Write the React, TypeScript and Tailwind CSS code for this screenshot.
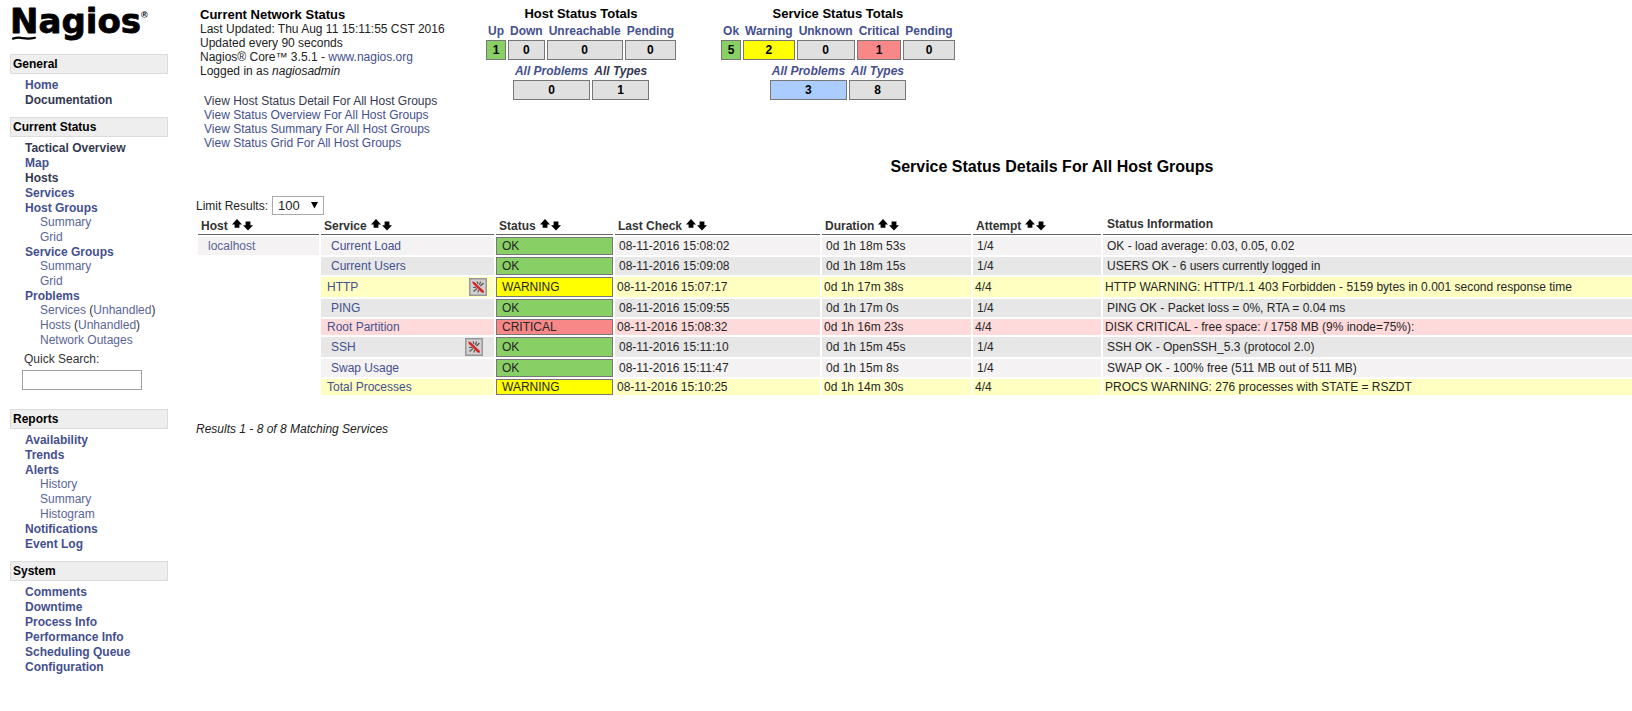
import React from "react";

type Item = { label: string; sub?: string[]; visited?: boolean };

const link = "text-[#44508f] hover:underline";
const visitedLink = "text-[#35384f] hover:underline";

const general: Item[] = [{ label: "Home" }, { label: "Documentation", visited: true }];

const currentStatus: Item[] = [
  { label: "Tactical Overview", visited: true },
  { label: "Map" },
  { label: "Hosts", visited: true },
  { label: "Services" },
  { label: "Host Groups", sub: ["Summary", "Grid"] },
  { label: "Service Groups", sub: ["Summary", "Grid"] },
  { label: "Problems", sub: ["Services (Unhandled)", "Hosts (Unhandled)", "Network Outages"] },
];

const reports: Item[] = [
  { label: "Availability" },
  { label: "Trends" },
  { label: "Alerts", sub: ["History", "Summary", "Histogram"] },
  { label: "Notifications" },
  { label: "Event Log" },
];

const system: Item[] = [
  { label: "Comments" },
  { label: "Downtime" },
  { label: "Process Info" },
  { label: "Performance Info" },
  { label: "Scheduling Queue" },
  { label: "Configuration" },
];

function SubLink({ text }: { text: string }) {
  const m = text.match(/^(\w+) \((\w+)\)$/);
  if (!m) return <a href="#" className="text-[#5a6598] hover:underline">{text}</a>;
  return (
    <>
      <a href="#" className="text-[#5a6598] hover:underline">{m[1]}</a> (
      <a href="#" className="text-[#5a6598] hover:underline">{m[2]}</a>)
    </>
  );
}

function NavSection({ title, items, children }: { title: string; items: Item[]; children?: React.ReactNode }) {
  return (
    <section>
      <h2 className="h-5 border border-[#dcdcdc] bg-[#eeeeee] pl-[2px] text-xs leading-[18px] font-bold">{title}</h2>
      <ul className="pt-1 pl-[15px] text-[#333]">
        {items.map((it) => (
          <li key={it.label}>
            <div className={it.sub ? "leading-[14px]" : "leading-[15px]"}>
              <a href="#" className={`font-bold ${it.visited ? visitedLink : link}`}>{it.label}</a>
            </div>
            {it.sub && (
              <ul className="pl-[15px] leading-[15px]">
                {it.sub.map((s) => (
                  <li key={s} className="whitespace-nowrap"><SubLink text={s} /></li>
                ))}
              </ul>
            )}
          </li>
        ))}
      </ul>
      {children}
    </section>
  );
}

function Logo() {
  return (
    <svg width="144" height="46" viewBox="0 0 144 46" role="img" aria-label="Nagios" className="block">
      <text x="0" y="33" fontFamily="DejaVu Sans" fontWeight="700" fontSize="34" stroke="#000" strokeWidth="0.8" strokeLinejoin="round">
        Nagios
      </text>
      <text x="131" y="18" fontFamily="Liberation Sans" fontWeight="700" fontSize="9">®</text>
      <path d="M3 38.6 Q8 37 13 38.2 Q19 39.2 25 37.8" fill="none" stroke="#000" strokeWidth="2.2" strokeLinecap="round" />
    </svg>
  );
}

type Total = { label: string; value: number; tone: string; visited?: boolean };
const gray = "bg-[#e0e0e0]";

function TotalsRow({ totals, italic }: { totals: Total[]; italic?: boolean }) {
  return (
    <table className="mx-auto border-separate border-spacing-x-[2px] border-spacing-y-0">
      <thead>
        <tr>
          {totals.map((t) => (
            <th key={t.label} className={`h-[18px] px-[2px] font-bold whitespace-nowrap ${italic ? "italic" : ""}`}>
              <a href="#" className={t.visited ? visitedLink : link}>{t.label}</a>
            </th>
          ))}
        </tr>
      </thead>
      <tbody>
        <tr>
          {totals.map((t) => (
            <td key={t.label} className={`h-5 border border-[#777777] p-0 text-center font-bold ${t.tone}`}>{t.value}</td>
          ))}
        </tr>
      </tbody>
    </table>
  );
}

function Totals({ title, rows }: { title: string; rows: Total[][] }) {
  return (
    <section>
      <h2 className="mb-px h-[14px] text-center text-[13px] leading-[14px] font-bold">{title}</h2>
      <TotalsRow totals={rows[0]} />
      <div className="pt-[2px]"><TotalsRow totals={rows[1]} italic /></div>
    </section>
  );
}

const hostTotals: Total[][] = [
  [
    { label: "Up", value: 1, tone: "bg-[#88d066]" },
    { label: "Down", value: 0, tone: gray },
    { label: "Unreachable", value: 0, tone: gray },
    { label: "Pending", value: 0, tone: gray },
  ],
  [
    { label: "All Problems", value: 0, tone: gray },
    { label: "All Types", value: 1, tone: gray, visited: true },
  ],
];

const serviceTotals: Total[][] = [
  [
    { label: "Ok", value: 5, tone: "bg-[#88d066]" },
    { label: "Warning", value: 2, tone: "bg-[#ffff00]" },
    { label: "Unknown", value: 0, tone: gray },
    { label: "Critical", value: 1, tone: "bg-[#f88888]" },
    { label: "Pending", value: 0, tone: gray },
  ],
  [
    { label: "All Problems", value: 3, tone: "bg-[#aaccff]" },
    { label: "All Types", value: 8, tone: gray },
  ],
];

function SortArrows({ column }: { column: string }) {
  return (
    <span className="ml-1 inline-flex gap-[1px] align-top">
      <a href="#" aria-label={`Sort by ${column} ascending`}>
        <svg width="10" height="12" viewBox="0 0 10 12"><path d="M5 0 L10 5.4 H7.4 V8.8 H2.6 V5.4 H0 Z" /></svg>
      </a>
      <a href="#" aria-label={`Sort by ${column} descending`}>
        <svg width="10" height="12" viewBox="0 0 10 12"><path d="M5 11.6 L0 6.2 H2.6 V2.6 H7.4 V6.2 H10 Z" /></svg>
      </a>
    </span>
  );
}

function PassiveIcon() {
  return (
    <svg width="18" height="18" viewBox="0 0 18 18" role="img" aria-label="Checks disabled" className="block">
      <rect x="0.75" y="0.75" width="16.5" height="16.5" fill="#d2d0d0" stroke="#989898" strokeWidth="1.5" />
      <path d="M8 3.5 L9 6 M11.5 3.5 L10.5 7 M14.5 5 L11.5 8 M4 9.5 H7 M4.5 13.5 L8 10.5 M9 14.5 L9.5 12" fill="none" stroke="#555" strokeWidth="1.2" />
      <path d="M3 3.5 L5.5 4 L15 13 L14.5 15 L12.5 14.5 L4 6 Z" fill="#d22a2a" />
    </svg>
  );
}

type Kind = "even" | "odd" | "warning" | "critical";
type Row = { name: string; kind: Kind; status: string; check: string; dur: string; att: string; info: string; icon?: boolean };

const rows: Row[] = [
  { name: "Current Load", kind: "even", status: "OK", check: "08-11-2016 15:08:02", dur: "0d 1h 18m 53s", att: "1/4", info: "OK - load average: 0.03, 0.05, 0.02" },
  { name: "Current Users", kind: "odd", status: "OK", check: "08-11-2016 15:09:08", dur: "0d 1h 18m 15s", att: "1/4", info: "USERS OK - 6 users currently logged in" },
  { name: "HTTP", kind: "warning", status: "WARNING", check: "08-11-2016 15:07:17", dur: "0d 1h 17m 38s", att: "4/4", info: "HTTP WARNING: HTTP/1.1 403 Forbidden - 5159 bytes in 0.001 second response time", icon: true },
  { name: "PING", kind: "odd", status: "OK", check: "08-11-2016 15:09:55", dur: "0d 1h 17m 0s", att: "1/4", info: "PING OK - Packet loss = 0%, RTA = 0.04 ms" },
  { name: "Root Partition", kind: "critical", status: "CRITICAL", check: "08-11-2016 15:08:32", dur: "0d 1h 16m 23s", att: "4/4", info: "DISK CRITICAL - free space: / 1758 MB (9% inode=75%):" },
  { name: "SSH", kind: "odd", status: "OK", check: "08-11-2016 15:11:10", dur: "0d 1h 15m 45s", att: "1/4", info: "SSH OK - OpenSSH_5.3 (protocol 2.0)", icon: true },
  { name: "Swap Usage", kind: "even", status: "OK", check: "08-11-2016 15:11:47", dur: "0d 1h 15m 8s", att: "1/4", info: "SWAP OK - 100% free (511 MB out of 511 MB)" },
  { name: "Total Processes", kind: "warning", status: "WARNING", check: "08-11-2016 15:10:25", dur: "0d 1h 14m 30s", att: "4/4", info: "PROCS WARNING: 276 processes with STATE = RSZDT" },
];

const rowTone: Record<Kind, string> = {
  even: "bg-[#f4f2f2]",
  odd: "bg-[#e7e7e7]",
  warning: "bg-[#feffc1]",
  critical: "bg-[#ffdada]",
};

const statusTone: Record<string, string> = {
  OK: "bg-[#88d066]",
  WARNING: "bg-[#ffff00]",
  CRITICAL: "bg-[#f88888]",
};

const columns = ["Host", "Service", "Status", "Last Check", "Duration", "Attempt"];

function StatusTable() {
  return (
    <table className="w-full table-fixed border-separate border-spacing-[2px] text-[#262626]">
      <colgroup>
        <col className="w-[121px]" />
        <col className="w-[173px]" />
        <col className="w-[117px]" />
        <col className="w-[205px]" />
        <col className="w-[149px]" />
        <col className="w-[128px]" />
        <col />
      </colgroup>
      <thead>
        <tr className="text-[#333]">
          {columns.map((c) => (
            <th key={c} className="h-[18px] border-b border-[#666] p-0 pl-[3px] text-left align-bottom leading-[15px] font-bold">
              {c}
              <SortArrows column={c} />
            </th>
          ))}
          <th className="border-b border-[#666] p-0 pb-[2px] pl-1 text-left align-bottom leading-[15px] font-bold">Status Information</th>
        </tr>
      </thead>
      <tbody>
        {rows.map((r, i) => {
          const plain = r.kind === "even" || r.kind === "odd";
          const height = r.icon ? "h-5" : plain ? "h-[18px]" : "h-4";
          const tone = rowTone[r.kind];
          const pad = plain ? "pl-1" : "pl-[2px]";
          return (
            <tr key={r.name} className="leading-[14px]">
              {i === 0 ? (
                <td className={`p-0 pl-[10px] ${tone}`}><a href="#" className="text-[#5a6598]">localhost</a></td>
              ) : (
                <td className="p-0" />
              )}
              <td className={`p-0 ${height} ${tone} ${plain ? "pr-[11px] pl-[10px]" : "pr-[7px] pl-[6px]"}`}>
                <div className="flex items-center justify-between">
                  <a href="#" className={link}>{r.name}</a>
                  {r.icon && <PassiveIcon />}
                </div>
              </td>
              <td className={`border border-[#777777] p-0 pl-[5px] ${statusTone[r.status]}`}>{r.status}</td>
              <td className={`p-0 ${pad} ${tone}`}>{r.check}</td>
              <td className={`p-0 ${pad} ${tone}`}>{r.dur}</td>
              <td className={`p-0 ${pad} ${tone}`}>{r.att}</td>
              <td className={`p-0 whitespace-nowrap ${pad} ${tone}`}>{r.info}</td>
            </tr>
          );
        })}
      </tbody>
    </table>
  );
}

export default function App() {
  return (
    <div className="flex min-h-screen overflow-hidden bg-white font-['Liberation_Sans',Arial,sans-serif] text-xs text-black">
      <nav className="w-[168px] shrink-0 pl-[10px]">
        <div className="h-[54px]"><Logo /></div>
        <div className="flex flex-col">
          <NavSection title="General" items={general} />
          <div className="h-[9px]" />
          <NavSection title="Current Status" items={currentStatus}>
            <form className="pt-[3px] pl-3" onSubmit={(e) => e.preventDefault()}>
              <label htmlFor="quick-search" className="block pl-[2px] leading-[17px] text-[#333]">Quick Search:</label>
              <input id="quick-search" type="text" className="mt-[2px] block h-5 w-[120px] border border-[#a0a0a0] bg-white px-1" />
            </form>
          </NavSection>
          <div className="h-[19px]" />
          <NavSection title="Reports" items={reports} />
          <div className="h-[9px]" />
          <NavSection title="System" items={system} />
        </div>
      </nav>

      <main className="min-w-0 flex-1 overflow-hidden pl-7">
        <div className="w-[calc(100%+276px)]">
          <header className="flex h-[151px] items-start pt-[7px]">
            <div className="w-[288px] shrink-0 pl-1 leading-[14px] text-[#222]">
              <h1 className="text-[13px] leading-[15px] font-bold text-black">Current Network Status</h1>
              <p>Last Updated: Thu Aug 11 15:11:55 CST 2016</p>
              <p>Updated every 90 seconds</p>
              <p>Nagios® Core™ 3.5.1 - <a href="#" className={link}>www.nagios.org</a></p>
              <p>Logged in as <i>nagiosadmin</i></p>
              <ul className="pt-4 pl-1">
                <li><a href="#" className={visitedLink}>View Host Status Detail For All Host Groups</a></li>
                <li><a href="#" className={link}>View Status Overview For All Host Groups</a></li>
                <li><a href="#" className={link}>View Status Summary For All Host Groups</a></li>
                <li><a href="#" className={link}>View Status Grid For All Host Groups</a></li>
              </ul>
            </div>
            <Totals title="Host Status Totals" rows={hostTotals} />
            <div className="w-[41px] shrink-0" />
            <Totals title="Service Status Totals" rows={serviceTotals} />
          </header>

          <h2 className="pt-[6px] text-center text-base leading-5 font-bold">Service Status Details For All Host Groups</h2>

          <div className="flex items-center gap-1 pt-[19px]">
            <label htmlFor="limit" className="text-[#222]">Limit Results:</label>
            <div className="relative">
              <select id="limit" defaultValue="100" className="block h-[19px] w-[52px] appearance-none border border-[#a9a9a9] bg-white pl-[5px] text-[13px] leading-[17px] text-[#222]">
                <option>50</option>
                <option>100</option>
                <option>250</option>
                <option>1000</option>
                <option>All</option>
              </select>
              <svg width="7" height="7" viewBox="0 0 7 7" className="pointer-events-none absolute top-[6px] right-[6px]"><path d="M0 0 H7 L3.5 6.5 Z" /></svg>
            </div>
          </div>

          <StatusTable />

          <p className="pt-[24px] leading-[16px] text-[#222] italic">Results 1 - 8 of 8 Matching Services</p>
        </div>
      </main>
    </div>
  );
}
